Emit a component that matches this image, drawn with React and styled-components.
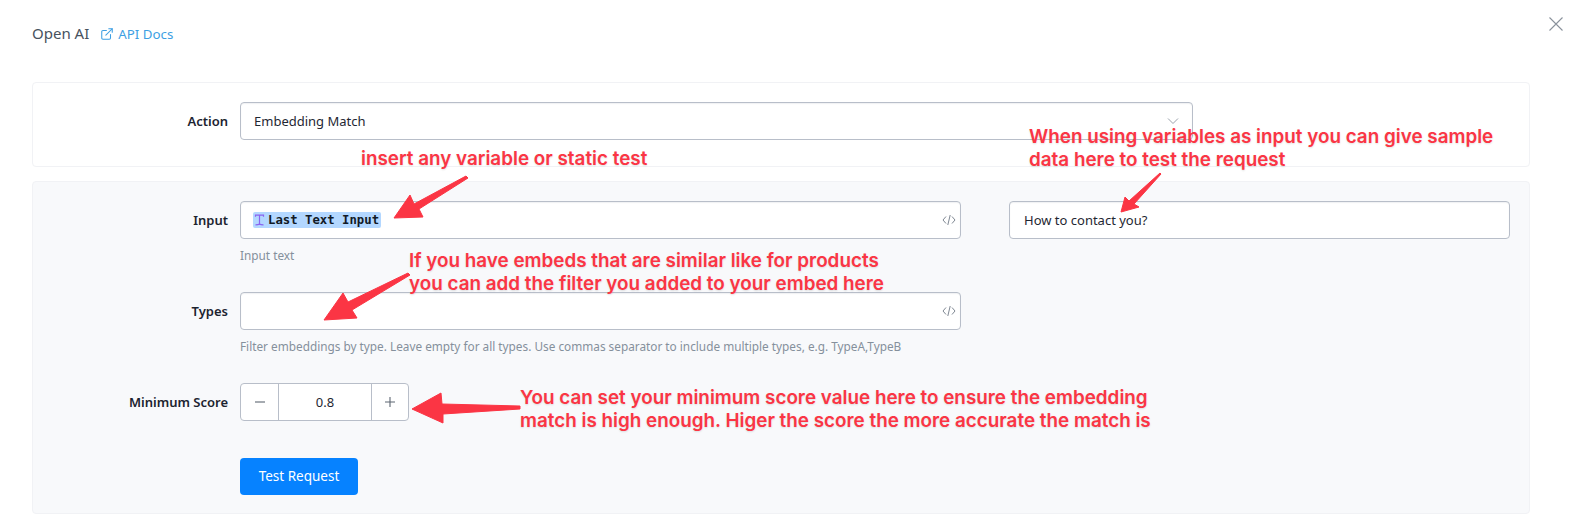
import React from 'react';
import styled, { createGlobalStyle } from 'styled-components';
import { ExternalLink } from 'lucide-react';

const GlobalStyle = createGlobalStyle`
  html, body {
    margin: 0;
    background: #ffffff;
  }
  body {
    font-family: "Noto Sans", "Open Sans", sans-serif;
    font-size: 13px;
    color: #1f2733;
  }
`;

const Page = styled.div`
  position: relative;
  width: 1583px;
  height: 529px;
  box-sizing: border-box;
  padding: 22px 0 0 32px;
  overflow: hidden;
`;

const Header = styled.header`
  display: flex;
  align-items: center;
  height: 22px;
  margin-bottom: 38px;
`;

const TitleGroup = styled.div`
  display: flex;
  align-items: center;
  gap: 11px;
`;

const Title = styled.span`
  font-size: 15px;
  color: #47525e;
`;

const DocsLink = styled.a`
  display: flex;
  align-items: center;
  gap: 4px;
  padding-top: 1px;
  font-size: 13.3px;
  color: #3d9fe3;
  text-decoration: none;
`;

const CloseButton = styled.button`
  position: absolute;
  top: 17px;
  right: 20px;
  display: flex;
  padding: 0;
  border: none;
  background: none;
  color: #8a929c;
`;

const Card = styled.section`
  width: 1498px;
  box-sizing: border-box;
  border: 1px solid #f1f2f5;
  border-radius: 4px;
  background: ${(p) => (p.$muted ? '#f8f9fb' : '#ffffff')};
  padding: ${(p) => (p.$muted ? '19px 19px 18px 0' : '19px 0 26px 0')};
  margin-bottom: 14px;
`;

const Row = styled.div`
  display: flex;
  align-items: flex-start;
  gap: 12px;
  margin-bottom: ${(p) => p.$gap || 0}px;
`;

const Label = styled.label`
  flex: none;
  width: 195px;
  height: 38px;
  line-height: 38px;
  text-align: right;
  font-size: 13px;
  font-weight: 600;
  color: #1c2430;
`;

const Field = styled.div`
  flex: none;
  width: ${(p) => p.$width}px;
`;

const Box = styled.div`
  display: flex;
  align-items: center;
  justify-content: space-between;
  height: 38px;
  box-sizing: border-box;
  padding: 0 ${(p) => p.$right || 13}px 0 ${(p) => p.$left || 13}px;
  background: #ffffff;
  border: 1px solid #b8bec9;
  border-radius: 4px;
  box-shadow: inset 0 1px 1px rgba(120, 130, 145, 0.12);
  font-size: 13px;
  color: #1f2733;
`;

const Help = styled.div`
  height: 20px;
  line-height: 20px;
  margin-top: 6px;
  font-size: 11.8px;
  color: #85909c;
`;

const SideField = styled(Field)`
  margin-left: 36px;
`;

const VariablePill = styled.span`
  display: inline-flex;
  align-items: center;
  gap: 3px;
  height: 16px;
  margin-left: -1px;
  padding: 0 2px 0 1px;
  background: #b3d7ff;
  border-radius: 2px;
  font-family: "DejaVu Sans Mono", monospace;
  font-size: 12.3px;
  font-weight: 700;
  color: #121a26;
`;

const Stepper = styled.div`
  display: grid;
  grid-template-columns: 37px 1fr 36px;
  width: 169px;
  height: 38px;
  box-sizing: border-box;
  background: #ffffff;
  border: 1px solid #b8bec9;
  border-radius: 4px;
`;

const StepButton = styled.button`
  display: flex;
  align-items: center;
  justify-content: center;
  padding: 0;
  background: none;
  border: none;
  color: #5d6672;
`;

const StepValue = styled.div`
  display: flex;
  align-items: center;
  justify-content: center;
  border-left: 1px solid #b8bec9;
  border-right: 1px solid #b8bec9;
  font-size: 13px;
  color: #1f2733;
`;

const SubmitRow = styled.div`
  padding-left: 207px;
`;

const SubmitButton = styled.button`
  width: 118px;
  height: 37px;
  padding: 0 0 2px;
  border: none;
  border-radius: 4px;
  background: #0682ff;
  font-family: inherit;
  font-size: 13.5px;
  color: #ffffff;
`;

const Note = styled.div`
  position: absolute;
  left: ${(p) => p.$x}px;
  top: ${(p) => p.$y}px;
  font-family: Inter, "Liberation Sans", sans-serif;
  font-size: 18.85px;
  font-weight: 600;
  line-height: 22.5px;
  white-space: nowrap;
  color: #fb3544;
  text-shadow: 0 1px 2px rgba(0, 0, 0, 0.12);
`;

const ArrowLayer = styled.svg`
  position: absolute;
  left: 0;
  top: 0;
  pointer-events: none;
`;

const CodeIcon = () => (
  <svg width="14" height="12" viewBox="0 0 14 12" fill="none" stroke="#7f8893" strokeWidth="1">
    <path d="M4 2.5 L1 6 L4 9.5 M10 2.5 L13 6 L10 9.5 M8.2 1 L5.8 11" />
  </svg>
);

const ChevronIcon = () => (
  <svg width="12" height="8" viewBox="0 0 12 8" fill="none" stroke="#9aa1ab" strokeWidth="1">
    <path d="M1 1.5 L6 6.5 L11 1.5" />
  </svg>
);

const TextVarIcon = () => (
  <svg width="11" height="12" viewBox="0 0 11 12" fill="none" stroke="#8a63f0" strokeWidth="1.2">
    <path d="M1.5 2.8 V1.2 H9.5 V2.8 M5.5 1.2 V9.8 M1.5 10.8 Q4.5 10.8 5.5 9.8 Q6.5 10.8 9.5 10.8" />
  </svg>
);

const arrows = [
  '394,218 410,195 414,204 466,176 468,178 419,209 423,217',
  '324,320 343,293 348,302 408,273 410,275 352,310 357,318',
  '412,409 441,393 442,404 520,406 520,409 443,414 443,423',
  '1121,212 1125,197 1129,201 1160,173 1161,174 1134,204 1139,207',
];

const App = () => {
  return (
    <Page>
      <GlobalStyle />
      <Header>
        <TitleGroup>
          <Title>Open AI</Title>
          <DocsLink href="#docs">
            <ExternalLink size={14} strokeWidth={1.8} />
            API Docs
          </DocsLink>
        </TitleGroup>
        <CloseButton aria-label="Close">
          <svg width="14" height="14" viewBox="0 0 14 14" stroke="currentColor" strokeWidth="1.1">
            <path d="M0.5 0.5 L13.5 13.5 M13.5 0.5 L0.5 13.5" />
          </svg>
        </CloseButton>
      </Header>

      <Card>
        <Row>
          <Label>Action</Label>
          <Field $width={953}>
            <Box>
              Embedding Match
              <ChevronIcon />
            </Box>
          </Field>
        </Row>
      </Card>

      <Card $muted>
        <Row $gap={27}>
          <Label>Input</Label>
          <Field $width={721}>
            <Box $right={4}>
              <VariablePill>
                <TextVarIcon />
                Last Text Input
              </VariablePill>
              <CodeIcon />
            </Box>
            <Help>Input text</Help>
          </Field>
          <SideField $width={501}>
            <Box $left={14}>How to contact you?</Box>
          </SideField>
        </Row>
        <Row $gap={27}>
          <Label>Types</Label>
          <Field $width={721}>
            <Box $right={4}>
              <span />
              <CodeIcon />
            </Box>
            <Help>Filter embeddings by type. Leave empty for all types. Use commas separator to include multiple types, e.g. TypeA,TypeB</Help>
          </Field>
        </Row>
        <Row $gap={37}>
          <Label>Minimum Score</Label>
          <Stepper>
            <StepButton aria-label="Decrease">
              <svg width="12" height="12" viewBox="0 0 12 12" stroke="currentColor" strokeWidth="1.1">
                <path d="M1 6 H11" />
              </svg>
            </StepButton>
            <StepValue>0.8</StepValue>
            <StepButton aria-label="Increase">
              <svg width="12" height="12" viewBox="0 0 12 12" stroke="currentColor" strokeWidth="1.1">
                <path d="M1 6 H11 M6 1 V11" />
              </svg>
            </StepButton>
          </Stepper>
        </Row>
        <SubmitRow>
          <SubmitButton>Test Request</SubmitButton>
        </SubmitRow>
      </Card>

      <Note $x={361} $y={148}>insert any variable or static test</Note>
      <Note $x={1029} $y={126}>
        When using variables as input you can give sample
        <br />
        data here to test the request
      </Note>
      <Note $x={409} $y={250}>
        If you have embeds that are similar like for products
        <br />
        you can add the filter you added to your embed here
      </Note>
      <Note $x={520} $y={387}>
        You can set your minimum score value here to ensure the embedding
        <br />
        match is high enough. Higer the score the more accurate the match is
      </Note>

      <ArrowLayer width="1583" height="529" viewBox="0 0 1583 529">
        {arrows.map((points) => (
          <polygon key={points} points={points} fill="#fb3544" stroke="#fb3544" strokeWidth="1" strokeLinejoin="round" />
        ))}
      </ArrowLayer>
    </Page>
  );
};

export default App;
